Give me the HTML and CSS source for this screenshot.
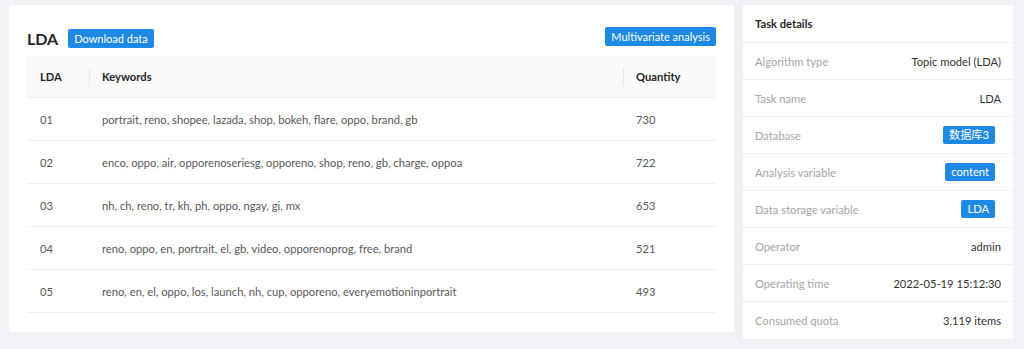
FILE: index.html
```html
<!DOCTYPE html>
<html>
	<head>
		<meta name="viewport" content="width=device-width, initial-scale=1.0">
		<meta charset="UTF-8">
		<title>LDA</title>
		<link rel="stylesheet" href="styles.css">
	</head>
	<body>
		<div class="page">
			<div class="card result-card">
				<div class="title-row">
					<div class="title-left">
						<h2 class="title">LDA</h2>
						<button class="btn">Download data</button>
					</div>
					<button class="btn btn-top">Multivariate analysis</button>
				</div>

				<table class="topic-table">
					<thead>
						<tr>
							<th class="col-id">LDA</th>
							<th class="col-words">Keywords</th>
							<th class="col-qty">Quantity</th>
						</tr>
					</thead>
					<tbody>
						<tr><td>01</td><td>portrait, reno, shopee, lazada, shop, bokeh, flare, oppo, brand, gb</td><td>730</td></tr>
						<tr><td>02</td><td>enco, oppo, air, opporenoseriesg, opporeno, shop, reno, gb, charge, oppoa</td><td>722</td></tr>
						<tr><td>03</td><td>nh, ch, reno, tr, kh, ph, oppo, ngay, gi, mx</td><td>653</td></tr>
						<tr><td>04</td><td>reno, oppo, en, portrait, el, gb, video, opporenoprog, free, brand</td><td>521</td></tr>
						<tr><td>05</td><td>reno, en, el, oppo, los, launch, nh, cup, opporeno, everyemotioninportrait</td><td>493</td></tr>
					</tbody>
				</table>
			</div>

			<div class="card detail-card">
				<div class="detail-head">Task details</div>
				<div class="detail-row"><span class="label">Algorithm type</span><span class="value">Topic model (LDA)</span></div>
				<div class="detail-row"><span class="label">Task name</span><span class="value">LDA</span></div>
				<div class="detail-row"><span class="label">Database</span><span class="tag">数据库3</span></div>
				<div class="detail-row"><span class="label">Analysis variable</span><span class="tag">content</span></div>
				<div class="detail-row"><span class="label">Data storage variable</span><span class="tag">LDA</span></div>
				<div class="detail-row"><span class="label">Operator</span><span class="value">admin</span></div>
				<div class="detail-row"><span class="label">Operating time</span><span class="value">2022-05-19 15:12:30</span></div>
				<div class="detail-row"><span class="label">Consumed quota</span><span class="value">3,119 items</span></div>
			</div>
		</div>
	</body>
</html>
```

FILE: styles.css
```css
body {
	margin: 0;
	background-color: #f0f2f5;
	font-family: Lato, "Noto Sans CJK SC", sans-serif;
	font-size: 11.2px;
	color: #595959;
}

.page {
	display: flex;
	align-items: flex-start;
	gap: 9px;
	padding: 5px 11px 0 9px;
}

.card {
	background-color: white;
}

.result-card {
	flex: 1;
	padding: 22px 18px 19px;
}

.title-row {
	display: flex;
	justify-content: space-between;
	align-items: flex-start;
	height: 21px;
	margin-bottom: 8px;
}

.title-left {
	display: flex;
	align-items: center;
	gap: 10px;
	margin-top: 2px;
}

.title {
	margin: 0;
	font-size: 16px;
	font-weight: bold;
	color: #262626;
	line-height: 19px;
}

.btn {
	background-color: #1e88e5;
	color: white;
	border: none;
	border-radius: 2px;
	font-family: inherit;
	font-size: 11px;
	height: 19px;
	line-height: 19px;
	padding: 0 6px;
}

.topic-table {
	width: 100%;
	border-collapse: collapse;
}

.topic-table th {
	position: relative;
	background-color: #fafafa;
	color: #262626;
	font-weight: bold;
	text-align: left;
	height: 41px;
	padding: 0 13px;
	border-bottom: 1px solid #f0f0f0;
}

/* little divider between the header cells */
.topic-table th + th::before {
	content: "";
	position: absolute;
	left: 0;
	top: 12px;
	height: 18px;
	width: 1px;
	background-color: #e8e8e8;
}

.topic-table td {
	height: 42px;
	padding: 0 13px;
	border-bottom: 1px solid #f0f0f0;
}

.col-id {
	width: 36px;
}

.col-qty {
	width: 67px;
}

.detail-card {
	width: 270px;
}

.detail-head {
	height: 37px;
	line-height: 37px;
	padding: 0 12px;
	font-weight: bold;
	color: #262626;
	border-bottom: 1px solid #f0f0f0;
}

.detail-row {
	display: flex;
	justify-content: space-between;
	align-items: center;
	height: 36px;
	padding: 0 12px;
	border-bottom: 1px solid #f0f0f0;
}

.detail-row:last-child {
	border-bottom: none;
	height: 37px;
}

.label {
	color: #a6a6a6;
}

.value {
	color: #333;
}

.tag {
	background-color: #1e88e5;
	color: white;
	height: 18px;
	line-height: 18px;
	padding: 0 6px;
	margin-right: 6px;
	border-radius: 2px;
}
```
